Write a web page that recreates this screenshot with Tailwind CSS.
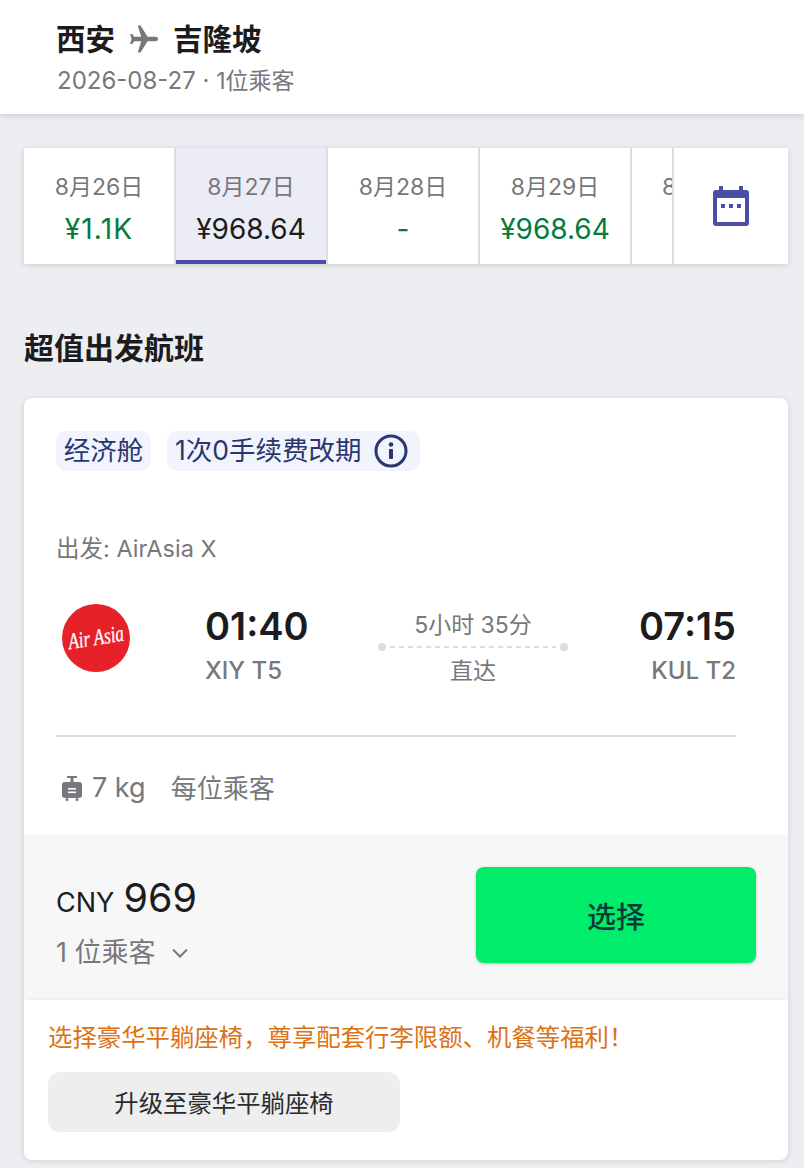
<!DOCTYPE html>
<html lang="zh-CN">
<head>
<meta charset="utf-8">
<script src="https://cdn.jsdelivr.net/npm/@tailwindcss/browser@4"></script>
</head>
<body class="m-0 bg-[#eceef2] font-['Inter','Noto_Sans_CJK_SC',sans-serif] text-[#1c1c1e] overflow-hidden">
<div class="w-[804px] h-[1168px] overflow-hidden">
  <header class="h-[114px] bg-white shadow-[0_2px_6px_rgba(0,0,0,0.14)] pl-[56px] pt-[19px]">
    <div class="flex items-center h-[40px] text-[29.5px] font-bold leading-[40px]">
      <span>西安</span>
      <svg class="ml-[13px] mr-[13px] w-[32px] h-[32px]" viewBox="0 0 24 24" fill="#77787c"><path d="M22.5 12c0-1-.9-1.6-1.9-1.6h-5.9L9.4 1.9H7.3l2.6 8.5H4.8L3.1 8.2H1.6L2.7 12l-1.1 3.8h1.5l1.7-2.2h5.1l-2.6 8.5h2.1l5.3-8.5h5.9c1 0 1.9-.6 1.9-1.6z"/></svg>
      <span>吉隆坡</span>
    </div>
    <div class="mt-[4px] text-[24px] leading-[36px] text-[#77787c] pl-[1px]">2026-08-27 · <span class="text-[23px]">1位乘客</span></div>
  </header>

  <div class="ml-[24px] mr-[16px] mt-[34px] h-[116px] bg-white shadow-[0_1px_6px_rgba(0,0,0,0.14)] flex">
    <div class="w-[150px] shrink-0 flex flex-col items-center pt-[22px]">
      <div class="text-[23px] leading-[34px] text-[#77787c]">8月26日</div>
      <div class="mt-[7px] text-[28px] leading-[36px] text-[#047a3e] tracking-[1.2px]">¥1.1K</div>
    </div>
    <div class="w-[2px] shrink-0 bg-[#dcdce2]"></div>
    <div class="w-[150px] shrink-0 flex flex-col items-center pt-[22px] bg-[#ebecf5] border-b-4 border-[#4a4ea6]">
      <div class="text-[23px] leading-[34px] text-[#77787c]">8月27日</div>
      <div class="mt-[7px] text-[28px] leading-[36px] text-[#1c1c1e]">¥968.64</div>
    </div>
    <div class="w-[2px] shrink-0 bg-[#dcdce2]"></div>
    <div class="w-[150px] shrink-0 flex flex-col items-center pt-[22px]">
      <div class="text-[23px] leading-[34px] text-[#77787c]">8月28日</div>
      <div class="mt-[7px] text-[28px] leading-[36px] text-[#047a3e]">-</div>
    </div>
    <div class="w-[2px] shrink-0 bg-[#dcdce2]"></div>
    <div class="w-[150px] shrink-0 flex flex-col items-center pt-[22px]">
      <div class="text-[23px] leading-[34px] text-[#77787c]">8月29日</div>
      <div class="mt-[7px] text-[28px] leading-[36px] text-[#047a3e]">¥968.64</div>
    </div>
    <div class="w-[2px] shrink-0 bg-[#dcdce2]"></div>
    <div class="w-[40px] shrink-0 overflow-hidden pt-[22px] pl-[30px]">
      <div class="w-[100px] text-[23px] leading-[34px] text-[#77787c]">8月30日</div>
    </div>
    <div class="w-[2px] shrink-0 bg-[#dcdce2]"></div>
    <div class="flex-1 flex items-center justify-center">
      <svg class="w-[36px] h-[40px]" viewBox="0 0 36 40" fill="#4a4ea6"><path fill-rule="evenodd" d="M6 0h4v4h16V0h4v4h3a3 3 0 0 1 3 3v30a3 3 0 0 1-3 3H3a3 3 0 0 1-3-3V7a3 3 0 0 1 3-3h3zM4 12v24h28V12z"/><rect x="8" y="18" width="4" height="4"/><rect x="16" y="18" width="4" height="4"/><rect x="24" y="18" width="4" height="4"/></svg>
    </div>
  </div>

  <h2 class="mx-[24px] mt-[64px] text-[30px] font-bold leading-[40px]">超值出发航班</h2>

  <section class="ml-[24px] mr-[16px] mt-[30px] h-[762px] bg-white rounded-[8px] shadow-[0_1px_6px_rgba(0,0,0,0.12)] overflow-hidden">
    <div class="pl-[32px] pr-[52px] pt-[33px]">
      <div class="flex gap-[16px] text-[#2a3670] text-[26.5px]">
        <span class="h-[40px] w-[95px] flex items-center justify-center bg-[#f1f4fc] rounded-[10px]">经济舱</span>
        <span class="h-[40px] flex items-center pl-[8px] pr-[12px] bg-[#f1f4fc] rounded-[10px]">1次0手续费改期
          <svg class="ml-[12px] w-[34px] h-[34px]" viewBox="0 0 34 34" fill="none"><circle cx="17" cy="17" r="15" stroke="#2a3670" stroke-width="3"/><rect x="15" y="15" width="4" height="10" rx="1" fill="#2a3670"/><circle cx="17" cy="10.5" r="2.3" fill="#2a3670"/></svg>
        </span>
      </div>
      <div class="mt-[60px] text-[23.5px] leading-[36px] text-[#77787c]">出发: AirAsia X</div>
      <div class="mt-[36px] flex items-start h-[96px]">
        <svg class="ml-[6px] mt-[1px] w-[68px] h-[68px] shrink-0 overflow-visible" viewBox="0 0 68 68"><circle cx="34" cy="34" r="34" fill="#e62129"/><text x="34" y="41" text-anchor="middle" fill="#fff" font-family="'Liberation Serif',serif" font-style="italic" font-size="23" textLength="56" lengthAdjust="spacingAndGlyphs" stroke="#fff" stroke-width="0.3" transform="rotate(-9 34 34)">Air Asia</text></svg>
        <div class="ml-[75px] w-[131px] shrink-0">
          <div class="text-[38px] leading-[46px] font-semibold">01:40</div>
          <div class="mt-[5px] text-[24px] leading-[34px] font-medium text-[#77787c]">XIY T5</div>
        </div>
        <div class="ml-[42px] w-[190px] shrink-0 flex flex-col items-center">
          <div class="text-[23px] leading-[30px] mt-[7px] text-[#77787c]">5小时 35分</div>
          <div class="relative w-full h-[2px] mt-[6px] mb-[2px]">
            <span class="absolute left-0 -top-[3px] w-[8px] h-[8px] rounded-full bg-[#dcdce2]"></span>
            <span class="absolute left-[12px] right-[12px] top-0 h-[2px] bg-[repeating-linear-gradient(90deg,#dcdce2_0_5px,transparent_5px_9px)]"></span>
            <span class="absolute right-0 -top-[3px] w-[8px] h-[8px] rounded-full bg-[#dcdce2]"></span>
          </div>
          <div class="text-[23px] leading-[30px] mt-[6px] text-[#77787c]">直达</div>
        </div>
        <div class="ml-auto text-right">
          <div class="text-[38px] leading-[46px] font-semibold">07:15</div>
          <div class="mt-[5px] text-[24px] leading-[34px] font-medium text-[#77787c]">KUL T2</div>
        </div>
      </div>
      <div class="mt-[36px] h-[2px] bg-[#dcdce2]"></div>
      <div class="mt-[33px] flex items-center h-[36px] text-[26px] text-[#77787c]">
        <svg class="ml-[6px] w-[20px] h-[26px]" viewBox="0 0 20 26" fill="#77787c"><path fill-rule="evenodd" d="M5 1h10v2h-3.5v5h-3V3H5z"/><path d="M3 7h14a3 3 0 0 1 3 3v10a3 3 0 0 1-3 3H3a3 3 0 0 1-3-3V10a3 3 0 0 1 3-3z"/><circle cx="5" cy="24.5" r="1.5"/><circle cx="15" cy="24.5" r="1.5"/><rect x="6" y="13" width="8" height="1.6" fill="#fff"/><rect x="6" y="16.5" width="8" height="1.6" fill="#fff"/></svg>
        <span class="ml-[10px] text-[27px]">7 kg</span>
        <span class="ml-[25px]">每位乘客</span>
      </div>
    </div>
    <div class="mt-[29px] h-[165px] bg-[#f7f7f8] border-b-2 border-[#f0f0f2] rounded-b-[4px] pl-[32px] pr-[32px] pt-[32px] flex items-start justify-between">
      <div>
        <div class="flex items-baseline mt-[7px] leading-[48px]">
          <span class="text-[27px]">CNY</span>
          <span class="ml-[9px] text-[39.5px]">969</span>
        </div>
        <div class="flex items-center mt-[6px] text-[27px] leading-[40px] text-[#77787c]">1 位乘客
          <svg class="ml-[16px] w-[16px] h-[10px]" viewBox="0 0 16 10" fill="none"><path d="M1 1.5l7 7 7-7" stroke="#77787c" stroke-width="2"/></svg>
        </div>
      </div>
      <button class="w-[280px] h-[96px] pt-[6px] bg-[#00ec6b] rounded-[8px] shadow-[0_1px_3px_rgba(0,0,0,0.25)] text-[#063a3a] text-[29px] font-medium">选择</button>
    </div>
    <div class="px-[24px]">
      <div class="mt-[19px] text-[24.4px] leading-[36px] text-[#dd7214]">选择豪华平躺座椅，尊享配套行李限额、机餐等福利！</div>
      <button class="mt-[17px] w-[352px] h-[60px] pt-[2px] bg-[#eeeeee] rounded-[12px] text-[24.4px] text-[#2c2c2e]">升级至豪华平躺座椅</button>
    </div>
  </section>
</div>
</body>
</html>
